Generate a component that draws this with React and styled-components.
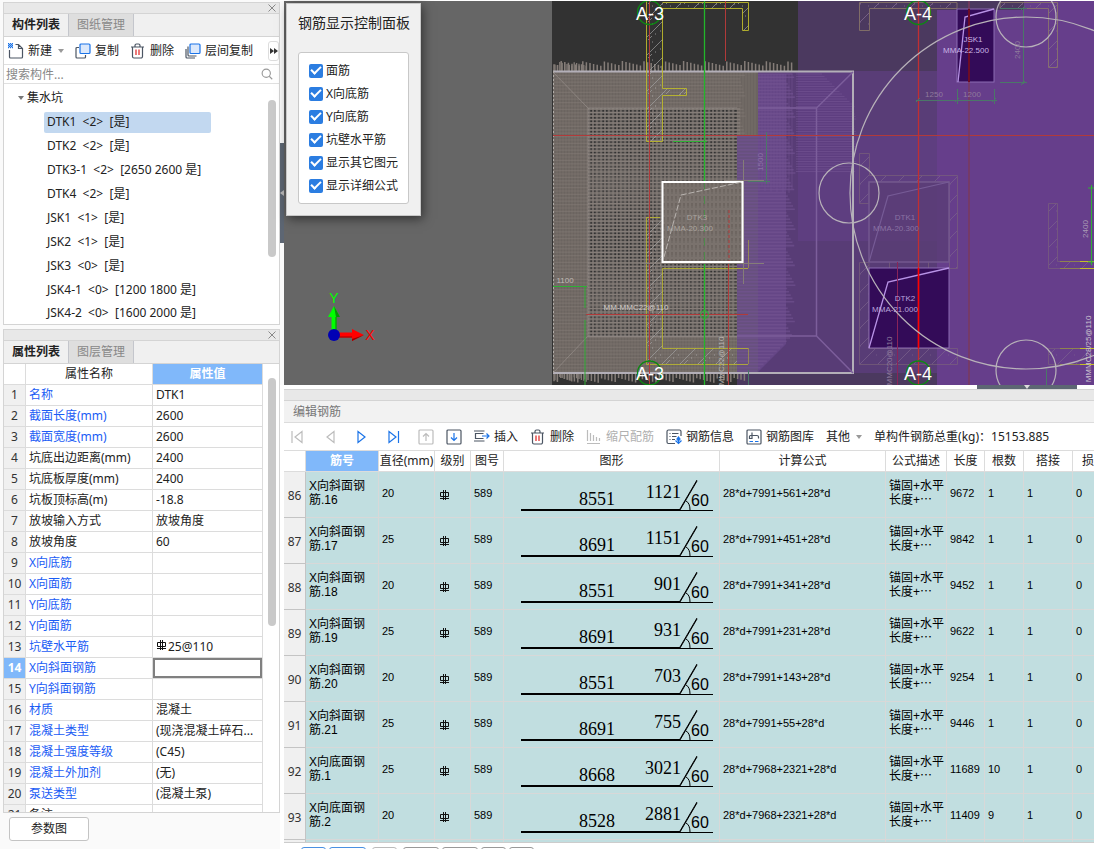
import React from "react";
import styled, { createGlobalStyle, css } from "styled-components";

const componentItems = [
  "DTK1  <2>  [是]",
  "DTK2  <2>  [是]",
  "DTK3-1  <2>  [2650 2600 是]",
  "DTK4  <2>  [是]",
  "JSK1  <1>  [是]",
  "JSK2  <1>  [是]",
  "JSK3  <0>  [是]",
  "JSK4-1  <0>  [1200 1800 是]",
  "JSK4-2  <0>  [1600 2000 是]",
];

const properties = [
  { name: "名称", value: "DTK1", link: true },
  { name: "截面长度(mm)", value: "2600", link: true },
  { name: "截面宽度(mm)", value: "2600", link: true },
  { name: "坑底出边距离(mm)", value: "2400" },
  { name: "坑底板厚度(mm)", value: "2400" },
  { name: "坑板顶标高(m)", value: "-18.8" },
  { name: "放坡输入方式", value: "放坡角度" },
  { name: "放坡角度", value: "60" },
  { name: "X向底筋", value: "", link: true },
  { name: "X向面筋", value: "", link: true },
  { name: "Y向底筋", value: "", link: true },
  { name: "Y向面筋", value: "", link: true },
  { name: "坑壁水平筋", value: "25@110", link: true, rebar: true },
  { name: "X向斜面钢筋", value: "", link: true, editing: true },
  { name: "Y向斜面钢筋", value: "", link: true },
  { name: "材质", value: "混凝土", link: true },
  { name: "混凝土类型", value: "(现浇混凝土碎石...", link: true },
  { name: "混凝土强度等级", value: "(C45)", link: true },
  { name: "混凝土外加剂", value: "(无)", link: true },
  { name: "泵送类型", value: "(混凝土泵)", link: true },
  { name: "备注", value: "" },
];

const displayOptions = ["面筋", "X向底筋", "Y向底筋", "坑壁水平筋", "显示其它图元", "显示详细公式"];

const rebarRows = [
  { no: 86, name: "X向斜面钢筋.16", dia: 20, base: 8551, slope: 1121, formula: "28*d+7991+561+28*d", length: 9672, count: 1 },
  { no: 87, name: "X向斜面钢筋.17", dia: 25, base: 8691, slope: 1151, formula: "28*d+7991+451+28*d", length: 9842, count: 1 },
  { no: 88, name: "X向斜面钢筋.18", dia: 20, base: 8551, slope: 901, formula: "28*d+7991+341+28*d", length: 9452, count: 1 },
  { no: 89, name: "X向斜面钢筋.19", dia: 25, base: 8691, slope: 931, formula: "28*d+7991+231+28*d", length: 9622, count: 1 },
  { no: 90, name: "X向斜面钢筋.20", dia: 20, base: 8551, slope: 703, formula: "28*d+7991+143+28*d", length: 9254, count: 1 },
  { no: 91, name: "X向斜面钢筋.21", dia: 25, base: 8691, slope: 755, formula: "28*d+7991+55+28*d", length: 9446, count: 1 },
  { no: 92, name: "X向底面钢筋.1", dia: 25, base: 8668, slope: 3021, formula: "28*d+7968+2321+28*d", length: 11689, count: 10 },
  { no: 93, name: "X向底面钢筋.2", dia: 20, base: 8528, slope: 2881, formula: "28*d+7968+2321+28*d", length: 11409, count: 9 },
];

const columns = [
  { title: "", width: 22 },
  { title: "筋号", width: 73, active: true },
  { title: "直径(mm)", width: 56 },
  { title: "级别", width: 36 },
  { title: "图号", width: 33 },
  { title: "图形", width: 216 },
  { title: "计算公式", width: 166 },
  { title: "公式描述", width: 61 },
  { title: "长度", width: 38 },
  { title: "根数", width: 39 },
  { title: "搭接", width: 49 },
  { title: "损", width: 42, left: true },
];

// ---------- icons ----------

const Icon = ({ children, size = 16 }) => (
  <svg width={size} height={size} viewBox="0 0 16 16" fill="none" stroke="#4b5563" strokeWidth="1.2" aria-hidden="true">
    {children}
  </svg>
);

const NewIcon = () => (
  <Icon>
    <path d="M1.5 7v7a1 1 0 0 0 1 1h11a1 1 0 0 0 1-1V5.500L10.500 1.500H7.500M10.500 1.500v4h4" />
    <path d="M0 .5h1M2 .5h1M4 .5h1M1 1.500h1M3 1.500h1M0 2.500h1M2 2.500h1M4 2.500h1M1 3.500h1M3 3.500h1M0 4.500h1M2 4.500h1M4 4.500h1" stroke="#1a73e8" strokeWidth="1.4" />
  </Icon>
);

const CopyIcon = () => (
  <Icon>
    <path d="M4 4.500H2a1 1 0 0 0-1 1V14a1 1 0 0 0 1 1h7.500a1 1 0 0 0 1-1v-2" />
    <rect x="5" y="1" width="10" height="9.500" rx="1" fill="#dbe8fb" stroke="#1a73e8" />
  </Icon>
);

const LayerCopyIcon = () => (
  <Icon>
    <path d="M3 3.500v8.500a1 1 0 0 0 1 1h7.500M1 6v8a1 1 0 0 0 1 1h8" />
    <rect x="5" y="1" width="10" height="9.500" rx="1" fill="#dbe8fb" stroke="#1a73e8" />
  </Icon>
);

const TrashIcon = () => (
  <Icon>
    <path d="M1 4h13M5 4V2.500a1.500 1.500 0 0 1 1.500-1.500h2A1.500 1.500 0 0 1 10 2.500V4M2.500 4v9.500A1.500 1.500 0 0 0 4 15h7a1.500 1.500 0 0 0 1.500-1.500V4" />
    <path d="M6 6.500v5.500M9 6.500v5.500" stroke="#e02020" />
  </Icon>
);

const SearchIcon = () => (
  <Icon size={12}>
    <circle cx="7" cy="7" r="5.500" stroke="#999" strokeWidth="1.500" />
    <path d="M11 11l4 4" stroke="#999" strokeWidth="1.500" />
  </Icon>
);

const CloseIcon = () => (
  <Icon size={8}>
    <path d="M1 1l14 14M15 1L1 15" stroke="#888" strokeWidth="2" />
  </Icon>
);

const FirstIcon = () => (
  <Icon>
    <path d="M2 2v12M12 2.500v11L5 8z" stroke="#bcbcbc" />
  </Icon>
);

const PrevIcon = () => (
  <Icon>
    <path d="M12 2.500v11L5 8z" stroke="#bcbcbc" />
  </Icon>
);

const NextIcon = () => (
  <Icon>
    <path d="M4 2.500v11L11 8z" stroke="#1a73e8" />
  </Icon>
);

const LastIcon = () => (
  <Icon>
    <path d="M3 2.500v11L10 8zM12.500 2v12" stroke="#1a73e8" />
  </Icon>
);

const UpIcon = () => (
  <Icon>
    <rect x="1" y="1" width="14" height="14" rx="1" stroke="#bcbcbc" />
    <path d="M8 12V5M5 7.500l3-3 3 3" stroke="#bcbcbc" />
  </Icon>
);

const DownIcon = () => (
  <Icon>
    <rect x="1" y="1" width="14" height="14" rx="1" />
    <path d="M8 4v7M5 8.500l3 3 3-3" stroke="#1a73e8" />
  </Icon>
);

const InsertIcon = () => (
  <Icon>
    <path d="M0 2h10.500M0 12h10.500M9.500 4.500H1.500v5h8" />
    <path d="M8 7h7M12.500 4.500L15 7l-2.500 2.500" stroke="#1a73e8" />
  </Icon>
);

const ScaleIcon = () => (
  <Icon>
    <path d="M1.500 1v11M4.500 4v8M7.500 6v6M10.500 8v4M13.500 9v3M1 14.500h13" stroke="#bcbcbc" />
  </Icon>
);

const InfoIcon = () => (
  <Icon>
    <path d="M9 14.500H2.500a1.500 1.500 0 0 1-1.500-1.500V2.500A1.500 1.500 0 0 1 2.500 1h11A1.500 1.500 0 0 1 15 2.500V7M3.500 4.500h1M6 4.500h6.500M3.500 7.500h1M6 7.500h4.500M3.500 10.500h1M6 10.500h3" />
    <path d="M12.500 7.500v3M12.500 14.500v-4M9.500 11.500l3 3 3-3M12.500 8l1.500 2-1.500 2-1.500-2z" stroke="#1a73e8" />
  </Icon>
);

const LibraryIcon = () => (
  <Icon>
    <rect x="1" y="1" width="14" height="14" rx="1" />
    <path d="M6 3.500v6H3.500V7.500a1 1 0 0 1 1-1H11a1.500 1.500 0 0 1 1.500 1.500v1.500" />
    <path d="M3.500 12.500h3.500M9 12.500h3.500" stroke="#1a73e8" />
  </Icon>
);

const RebarSymbol = () => (
  <svg width="10" height="11" viewBox="0 0 10 11" fill="none" stroke="#111" strokeWidth="1" aria-hidden="true">
    <path d="M.5 2.500h8v4h-8zM3.500 0v10M5.500 0v10M0 8.500h9" />
  </svg>
);

const BarShape = ({ base, slope }) => (
  <svg width="206" height="44" viewBox="0 0 206 44" aria-hidden="true">
    <path d="M14 37H173" stroke="#000" strokeWidth="2" />
    <path d="M173 37.500H207M190 8L173 37M179 28q4 2 4 9" fill="none" stroke="#000" strokeWidth="1" />
    <path d="M190 7L173 36" stroke="#000" strokeWidth="1" />
    <ShapeText x="72" y="32">{base}</ShapeText>
    <ShapeText x="174" y="25" textAnchor="end">{slope}</ShapeText>
    <AngleText x="184" y="33">60</AngleText>
  </svg>
);

// ---------- model view ----------

const jitter = (i) => ((i * 37 + 11) % 17) / 17;

const steps = (from, to, step) => {
  const out = [];
  for (let v = from; v < to; v += step) out.push(v);
  return out;
};

const meshVertical = steps(589, 737, 4).map((x) => `M${x} 108V337`).join("");
const meshHorizontal = steps(109, 337, 3.5).map((y) => `M588 ${y}H740`).join("");
const frameVertical = steps(554, 757, 3).map((x) => `M${x} 71V373`).join("");
const frameHorizontal = steps(72, 373, 3.4).map((y, i) => `M553 ${y}H${740 + jitter(i) * 6}`).join("");
const topTicks = steps(554, 794, 3.6).map((x, i) => `M${x} ${61 + jitter(i) * 5}V71`).join("");
const cornerTicks = steps(555, 588, 2.4).map((x, i) => `M${x} ${62 + jitter(i) * 4}V71M${x} 373V${377 + jitter(i) * 5}`).join("");
const bottomTicks = steps(554, 746, 3.4).map((x, i) => `M${x} 373V${378 + jitter(i) * 5}`).join("");
const purpleStripes = steps(74, 372, 3.3)
  .map((y, i) => `M${y < 136 ? 758 : 737} ${y}H${y > 335 ? 793 - (y - 335) : 786 + jitter(i) * 10}`)
  .join("");
const purpleBars = steps(759, 795, 3).map((x) => `M${x} 74V${186 + jitter(x) * 8}`).join("");
const cornerStripes = steps(74, 172, 2.5)
  .map((y, i) => `M796 ${y}H${Math.min(822 + (y - 74), 853 + jitter(i) * 4)}`)
  .join("");

const ModelDrawing = () => (
  <Drawing viewBox="284 1 810 384" preserveAspectRatio="xMinYMin slice" role="img" aria-label="基坑模型">
    <defs>
      <pattern id="hatch" width="18" height="18" patternUnits="userSpaceOnUse">
        <path d="M0 18L18 0M-4 8L8-4" stroke="#a5a5a5" strokeWidth="1" />
        <path d="M4 6h1M12 13h1M14 4h1M7 16h1" stroke="#bbb" strokeWidth="1" />
      </pattern>
      <pattern id="hatchDim" width="18" height="18" patternUnits="userSpaceOnUse">
        <path d="M0 18L18 0" stroke="#80688f" strokeWidth="1" />
        <path d="M4 6h1M12 13h1M14 4h1" stroke="#80688f" strokeWidth="1" />
      </pattern>
    </defs>
    <rect x="284" y="1" width="810" height="384" fill="#666" />
    <rect x="552" y="1" width="542" height="384" fill="#323232" />
    <rect x="798" y="1" width="139" height="384" fill="#4b395f" />
    <rect x="737" y="136" width="61" height="249" fill="#4b395f" />
    <rect x="758" y="71" width="179" height="302" fill="#583c76" />
    <rect x="737" y="136" width="21" height="237" fill="#583c76" />
    <rect x="798" y="71" width="139" height="170" fill="#5e3e80" />
    <rect x="853" y="71" width="84" height="64" fill="#593d77" />
    <rect x="937" y="1" width="157" height="384" fill="#663e8b" />
    <rect x="937" y="1" width="87" height="9" fill="#4b395f" />

    {/* reinforcement mesh */}
    <rect x="553" y="71" width="184" height="302" fill="#45403c" />
    <rect x="737" y="71" width="21" height="65" fill="#45403c" />
    <rect x="588" y="108" width="149" height="229" fill="#323232" />
    <g stroke="#857d78">
      <path d={topTicks} strokeWidth="1.500" />
      <path d={cornerTicks} strokeWidth="1.300" />
      <path d={bottomTicks} strokeWidth="1.500" />
      <path d={frameVertical} strokeWidth="1.200" opacity=".35" />
      <path d={frameHorizontal} strokeWidth="1.200" opacity=".45" />
      <path d={meshVertical} strokeWidth="1.600" opacity=".8" />
      <path d={meshHorizontal} strokeWidth="1.500" />
    </g>
    <path d="M553 71H588V373H553zM588 71H737V108H588zM588 337H737V373H588zM737 71H758V136H737z" fill="#857d78" opacity=".6" />
    <path d="M737 136H758V373H737z" fill="#67507e" />
    <path d="M758 74H786V344L758 372z" fill="#654686" />
    <g stroke="#745493">
      <path d={purpleStripes} strokeWidth="1.600" opacity=".6" />
      <path d={purpleBars} strokeWidth="1" opacity=".5" />
      <path d={cornerStripes} strokeWidth="1" opacity=".6" />
    </g>

    {/* pit outline */}
    <path d="M553 71.500H853V373H553" fill="none" stroke="#b3afb8" strokeWidth="2" />
    <path d="M553.500 71V373" stroke="#b0aca8" strokeDasharray="2 2" />
    <path d="M588 108H737M588 108V336M588 336H737M553 72l35 36M553 373l35-37" fill="none" stroke="#a39c98" strokeWidth="1" opacity=".5" />
    <path d="M758 108H816.500M737 336H816.500V108M816.500 108L853 72M816.500 336L853 373" fill="none" stroke="#7c5e9b" strokeWidth="1.500" />

    {/* walls */}
    <g fill="url(#hatch)" opacity=".65">
      <path d="M647 1H663V141H647zM663 2H749V31H742V9H663zM663 88H686V95H663zM647 217H663V348H737V364H647z" />
    </g>
    <g fill="none" stroke="#bdb92b">
      <path d="M646.500 1V141.500H662.500V95.500H686.500V88.500H662.500V8.500M662.500 2.500H748.500V30.500H742.500V8.500H662.500" opacity=".9" />
      <path d="M660 217.500H646.500V364.500H748M662.500 268.500V348.500H748M662.500 268.500H748" opacity=".8" />
      <path d="M748.500 240V268M748.500 348V364" opacity=".5" />
    </g>
    <g fill="url(#hatchDim)" opacity=".8" stroke="#8e7b6a">
      <path d="M859.500 2.500V30.500H869.500V8.500H957V2.500z" />
      <path d="M1000 2.500H1057.500V67.500H1048.500V8.500H1000z" />
    </g>
    <g fill="url(#hatchDim)" opacity=".6" stroke="#7e6679">
      <path d="M859.500 153.500H869.500V175.500H957.500V268.500H949.500V182H869V203.500H859.500z" />
      <path d="M869 262.500H859.500V364.500H957.500V348.500H869z" />
      <path d="M889.500 262V268M928.500 262V268" />
      <path d="M1048.500 203.500H1057.500V261.500H1096V268.500H1048.500z" />
      <path d="M1048.500 348.500H1096V364.500H1048.500z" />
    </g>
    <path d="M1060 261.500h20M1060 268.500h20M1060 348.500h20M1060 364.500h20" stroke="#8f8350" />
    <path d="M1080 261.500h14M1080 268.500h14M1080 348.500h14M1080 364.500h14" stroke="#c4bd28" />

    {/* sub pits */}
    <rect x="869" y="182" width="80" height="80" fill="#5a3d76" fillOpacity=".8" stroke="#73578f" strokeWidth="1.500" />
    <path d="M869 262L888 196L949 182" fill="none" stroke="#765b96" strokeWidth="1.200" />
    <rect x="869" y="268" width="80" height="80" fill="#330b58" stroke="#8c6cb3" />
    <path d="M869 348L888 282L949 268" fill="none" stroke="#b893e6" strokeWidth="1.300" />
    <rect x="957" y="9" width="37" height="73" fill="#330b58" stroke="#8c6cb3" />
    <path d="M958 82L965 17L994 9" fill="none" stroke="#b893e6" strokeWidth="1.300" />

    {/* selected pit surface */}
    <rect x="662" y="182" width="80" height="80" fill="#7a726d" />
    <path d={steps(664, 742, 4).map((x) => `M${x} 182V262`).join("")} stroke="#5a544f" strokeDasharray="1 2.500" opacity=".8" />
    <path d={steps(184, 262, 7).map((y) => `M663 ${y}H742`).join("")} stroke="#4c4743" strokeDasharray="2 2" opacity=".5" />

    {/* axes and dimension lines */}
    <g fill="none" stroke="#b13a3a">
      <path d="M649.500 1V385M553 135.500H1094M725.500 1V61" />
      <path d="M586 314.500H748" />
      <path d="M729 210V262" strokeDasharray="3 2" />
      <path d="M728.500 262V385" />
    </g>
    <path d="M969 1V385" stroke="#7b3a5c" strokeWidth="1.500" />
    <path d="M969 9V82" stroke="#6d0c26" strokeWidth="2" />
    <path d="M897.500 262V385" stroke="#8a2459" />
    <path d="M918.500 1V385" stroke="#c02f32" strokeWidth="1.300" />
    <path d="M918.500 268V348" stroke="#f00" strokeWidth="1.500" />
    <path d="M704.500 1V182M704.500 262V385" stroke="#22b62a" strokeWidth="1.300" />
    <path d="M704.500 182V262" stroke="#4d8a4a" strokeDasharray="8 6" />
    <g fill="none" stroke="#2eae35">
      <path d="M673 141.500H707M553 286.500H587M585 286V308M585 320V385" />
      <circle cx="704.500" cy="314.500" r="4" />
      <path d="M1091.500 185V265M1088 188h6M1088 262h6" />
    </g>
    <g fill="none" stroke="#4b7768">
      <path d="M766.500 132V184M748 181.500H770M748.500 370V385" />
      <path d="M1023.500 8V84M1000 8.500H1027M1000 82.500H1027" />
      <path d="M916 100.500H997M957.500 89V104M994.500 89V104M1046.500 369V385" />
      <path d="M916 102l4-4M955 102l4-4M992 102l4-4M1021 10l4-4M1021 85l4-4" />
    </g>
    <path d="M743.500 160V284M640 263.500H764M724 180.500H764" stroke="#857d78" />

    {/* selected pit */}
    <rect x="662.500" y="182" width="80" height="80" fill="none" stroke="#fff" strokeWidth="2" />
    <path d="M664 257L681 195L742 182" fill="none" stroke="#b9b4b0" strokeDasharray="6 2" />

    <g fill="none" stroke="#b8b2b9" strokeWidth="1.200">
      <circle cx="1026" cy="193" r="176" />
      <circle cx="849" cy="193" r="30" />
      <circle cx="1026" cy="17" r="30" />
      <circle cx="1026" cy="370" r="30" />
    </g>

    <g fill="none" stroke="#0c8a12" strokeWidth="1.300">
      <circle cx="649.500" cy="12.500" r="12" />
      <circle cx="649.500" cy="373" r="12" />
      <circle cx="918.500" cy="12.500" r="12" />
      <circle cx="918.500" cy="373" r="12" />
    </g>
    <AxisLabel x="650" y="20">A-3</AxisLabel>
    <AxisLabel x="650" y="380">A-3</AxisLabel>
    <AxisLabel x="918" y="20">A-4</AxisLabel>
    <AxisLabel x="918" y="380">A-4</AxisLabel>

    <CadText x="697" y="220" $color="#aaa49f">DTK3</CadText>
    <CadText x="690" y="231" $color="#aaa49f">MMA-20.300</CadText>
    <CadText x="905" y="220" $color="#8a72a3">DTK1</CadText>
    <CadText x="896" y="231" $color="#8a72a3">MMA-20.300</CadText>
    <CadText x="905" y="301" $color="#bba5dc">DTK2</CadText>
    <CadText x="895" y="312" $color="#bba5dc">MMA-21.000</CadText>
    <CadText x="973" y="42" $color="#c9b4e6">JSK1</CadText>
    <CadText x="966" y="53" $color="#c9b4e6">MMA-22.500</CadText>
    <CadText x="934" y="97" $color="#8f7b9c">1250</CadText>
    <CadText x="972" y="97" $color="#8f7b9c">1200</CadText>
    <CadText x="565" y="283" $color="#c0bab6">1100</CadText>
    <CadText x="636" y="310" $color="#d0cac6">MM-MMC22@110</CadText>
    <CadText transform="translate(763 162) rotate(-90)" $color="#8b72a4">1500</CadText>
    <CadText transform="translate(1020 50) rotate(-90)" $color="#8f7b9c">2400</CadText>
    <CadText transform="translate(1088 229) rotate(-90)" $color="#aa9bb5">2400</CadText>
    <CadText transform="translate(1091 349) rotate(-90)" $color="#cbc3d0">MMMC28/25@110</CadText>
    <CadText transform="translate(892 361) rotate(-90)" $color="#8f7b9c">MMC20@110</CadText>
    <CadText transform="translate(724 361) rotate(-90)" $color="#bdb7b3">MMC22@110</CadText>

    {/* coordinate tripod */}
    <path d="M334 335V316" stroke="#0f0" strokeWidth="5" />
    <path d="M336 335V316" stroke="#0a7a0a" strokeWidth="1" />
    <path d="M334 306l6 11h-12z" fill="#0f0" />
    <path d="M334 306l6 11h-4z" fill="#0a8f0a" />
    <path d="M335 335H352" stroke="#f00" strokeWidth="5" />
    <path d="M335 337H352" stroke="#900" strokeWidth="1" />
    <path d="M364 335l-12-6v12z" fill="#f00" />
    <path d="M364 335l-12 4v2z" fill="#900" />
    <circle cx="334" cy="335" r="6" fill="#0000b4" />
    <TripodText x="334" y="303" fill="#0f0">Y</TripodText>
    <TripodText x="370" y="340" fill="#f00">X</TripodText>
  </Drawing>
);

// ---------- panels ----------

function ComponentPanel() {
  return (
    <Panel>
      <PanelStrip>
        <CloseButton aria-label="关闭构件列表"><CloseIcon /></CloseButton>
      </PanelStrip>
      <Tabs>
        <Tab $active>构件列表</Tab>
        <Tab>图纸管理</Tab>
      </Tabs>
      <ListToolbar>
        <ToolButton><NewIcon />新建<Caret $gap /></ToolButton>
        <ToolButton><CopyIcon />复制</ToolButton>
        <ToolButton><TrashIcon />删除</ToolButton>
        <ToolButton><LayerCopyIcon />层间复制</ToolButton>
        <MoreButton aria-label="更多">
          <svg width="8" height="6" viewBox="0 0 8 6" aria-hidden="true">
            <path d="M0 0l4 3-4 3zM4 0l4 3-4 3z" fill="#333" />
          </svg>
        </MoreButton>
      </ListToolbar>
      <SearchBar>
        <SearchInput aria-label="搜索构件" placeholder="搜索构件..." />
        <SearchIcon />
      </SearchBar>
      <ScrollArea>
        <Tree>
          <TreeGroup><Caret $dark />集水坑</TreeGroup>
          {componentItems.map((item, i) => (
            <TreeRow key={item}>
              <TreeItem $selected={i === 0}>{item}</TreeItem>
            </TreeRow>
          ))}
        </Tree>
        <ScrollTrack><ScrollThumb $top={16} $height={157} /></ScrollTrack>
      </ScrollArea>
    </Panel>
  );
}

function PropertyPanel() {
  return (
    <Panel $grow>
      <PanelStrip>
        <CloseButton aria-label="关闭属性列表"><CloseIcon /></CloseButton>
      </PanelStrip>
      <Tabs>
        <Tab $active>属性列表</Tab>
        <Tab>图层管理</Tab>
      </Tabs>
      <ScrollArea $grow>
        <PropertyTable>
          <colgroup>
            <col width="22" />
            <col width="127" />
            <col />
          </colgroup>
          <thead>
            <tr>
              <PropHead />
              <PropHead>属性名称</PropHead>
              <PropHead $active>属性值</PropHead>
            </tr>
          </thead>
          <tbody>
            {properties.map((p, i) => (
              <tr key={p.name}>
                <PropIndex $active={p.editing}>{i + 1}</PropIndex>
                <PropName $link={p.link}>{p.name}</PropName>
                <PropValue $editing={p.editing}>
                  {p.rebar && <RebarSymbol />}
                  {p.editing ? <ValueInput aria-label={p.name} /> : p.value}
                </PropValue>
              </tr>
            ))}
          </tbody>
        </PropertyTable>
        <ScrollTrack><ScrollThumb $top={14} $height={248} /></ScrollTrack>
      </ScrollArea>
    </Panel>
  );
}

function DisplayPanel() {
  return (
    <FloatingPanel>
      <FloatingTitle>钢筋显示控制面板</FloatingTitle>
      <OptionBox>
        {displayOptions.map((label) => (
          <Option key={label}>
            <Checkbox type="checkbox" defaultChecked />
            {label}
          </Option>
        ))}
      </OptionBox>
    </FloatingPanel>
  );
}

function RebarEditor() {
  return (
    <Editor>
      <EditorStrip />
      <EditorTitle>编辑钢筋</EditorTitle>
      <EditorToolbar>
        <NavButton aria-label="首行"><FirstIcon /></NavButton>
        <NavButton aria-label="上一行"><PrevIcon /></NavButton>
        <NavButton aria-label="下一行"><NextIcon /></NavButton>
        <NavButton aria-label="末行"><LastIcon /></NavButton>
        <NavButton $narrow aria-label="上移"><UpIcon /></NavButton>
        <NavButton $narrow aria-label="下移"><DownIcon /></NavButton>
        <Actions>
          <ToolButton><InsertIcon />插入</ToolButton>
          <ToolButton><TrashIcon />删除</ToolButton>
          <ToolButton disabled><ScaleIcon />缩尺配筋</ToolButton>
          <ToolButton><InfoIcon />钢筋信息</ToolButton>
          <ToolButton><LibraryIcon />钢筋图库</ToolButton>
          <ToolButton>其他<Caret $gap /></ToolButton>
          <Total>单构件钢筋总重(kg)：15153.885</Total>
        </Actions>
      </EditorToolbar>
      <TableWrap>
        <RebarTable>
          <colgroup>
            {columns.map((c, i) => <col key={i} width={c.width} />)}
          </colgroup>
          <thead>
            <tr>
              {columns.map((c, i) => (
                <RebarHead key={i} $active={c.active} $left={c.left}>{c.title}</RebarHead>
              ))}
            </tr>
          </thead>
          <tbody>
            {rebarRows.map((r) => (
              <tr key={r.no}>
                <RowNumber>{r.no}</RowNumber>
                <Cell $wrap>{r.name}</Cell>
                <Cell>{r.dia}</Cell>
                <Cell $symbol><RebarSymbol /></Cell>
                <Cell>589</Cell>
                <Cell $shape><BarShape base={r.base} slope={r.slope} /></Cell>
                <Cell>{r.formula}</Cell>
                <Cell $wrap>锚固+水平<br />长度+⋯</Cell>
                <Cell>{r.length}</Cell>
                <Cell>{r.count}</Cell>
                <Cell>1</Cell>
                <Cell>0</Cell>
              </tr>
            ))}
            <tr>
              <RowNumber />
              {columns.slice(1).map((c) => <Cell key={c.title} />)}
            </tr>
          </tbody>
        </RebarTable>
      </TableWrap>
      <PageBar>
        <PageButton $width={25} $tone="#4a90e2" aria-label="第1页" />
        <PageButton $width={37} $tone="#4a90e2" aria-label="第2页" />
        <PageButton $width={25} $tone="#bbb" $apart aria-label="第3页" />
        <PageButton $width={36} $tone="#999" $apart aria-label="第4页" />
        <PageButton $width={36} $tone="#999" aria-label="第5页" />
        <PageButton $width={25} $tone="#999" aria-label="第6页" />
        <PageButton $width={25} $tone="#999" aria-label="第7页" />
      </PageBar>
    </Editor>
  );
}

function App() {
  return (
    <>
      <GlobalStyle />
      <Window>
        <Sidebar>
          <ComponentPanel />
          <PropertyPanel />
          <SidebarFooter>
            <ParamButton>参数图</ParamButton>
          </SidebarFooter>
        </Sidebar>
        <Main>
          <ViewRow>
            <SideSplitter>
              <SideHandle aria-label="收起侧栏">
                <svg width="4" height="6" viewBox="0 0 4 6" aria-hidden="true">
                  <path d="M4 0L0 3l4 3z" fill="#bbb" />
                </svg>
              </SideHandle>
            </SideSplitter>
            <ModelView>
              <ModelDrawing />
              <DisplayPanel />
            </ModelView>
          </ViewRow>
          <BottomSplitter>
            <BottomHandle aria-label="收起编辑区">
              <svg width="6" height="4" viewBox="0 0 6 4" aria-hidden="true">
                <path d="M0 0h6L3 4z" fill="#ddd" />
              </svg>
            </BottomHandle>
          </BottomSplitter>
          <RebarEditor />
        </Main>
      </Window>
    </>
  );
}

export default App;

const GlobalStyle = createGlobalStyle`
  * {
    box-sizing: border-box;
  }

  body {
    margin: 0;
    background: #fff;
    color: #222;
    font-family: "Noto Sans", "Noto Sans CJK SC", sans-serif;
    font-size: 12px;
    line-height: 16px;
  }

  button,
  input {
    font: inherit;
    color: inherit;
  }

  svg {
    flex: none;
  }
`;

const Window = styled.div`
  display: flex;
  height: 100vh;
  overflow: hidden;
`;

const Sidebar = styled.aside`
  flex: 0 0 280px;
  display: flex;
  flex-direction: column;
  gap: 4px;
  padding: 2px 0 0 3px;
  background: #fafafa;
`;

const Main = styled.main`
  flex: 1;
  min-width: 0;
  display: flex;
  flex-direction: column;
  padding-top: 1px;
`;

const Panel = styled.section`
  display: flex;
  flex-direction: column;
  border: 1px solid #d4d4d4;
  background: #fff;
  ${(props) =>
    props.$grow &&
    css`
      flex: 1;
      min-height: 0;
    `}
`;

const PanelStrip = styled.div`
  display: flex;
  justify-content: flex-end;
  align-items: center;
  height: 10px;
  padding-right: 3px;
  background: #e8e8e8;
`;

const CloseButton = styled.button`
  display: flex;
  padding: 0;
  border: 0;
  background: none;
`;

const Tabs = styled.div`
  display: flex;
  height: 24px;
  background: #f0f0f0;
  border-top: 1px solid #d4d4d4;
  border-bottom: 1px solid #d4d4d4;
`;

const Tab = styled.button`
  width: 65px;
  padding: 0;
  border: 0;
  border-right: 1px solid #c4c6cc;
  background: ${(props) => (props.$active ? "#f0f0f0" : "#dedede")};
  color: ${(props) => (props.$active ? "#222" : "#888")};
  font-weight: ${(props) => (props.$active ? "bold" : "normal")};
`;

const ListToolbar = styled.div`
  display: flex;
  align-items: center;
  gap: 11px;
  height: 28px;
  padding-left: 4px;
  border-bottom: 1px solid #e0e0e0;
`;

const ToolButton = styled.button`
  display: flex;
  align-items: center;
  gap: 4px;
  padding: 0;
  border: 0;
  background: none;
  white-space: nowrap;

  &:disabled {
    color: #b0b0b0;
  }
`;

const Caret = styled.span`
  width: 0;
  height: 0;
  margin-left: ${(props) => (props.$gap ? "2px" : "0")};
  border: 3px solid transparent;
  border-top: 4px solid ${(props) => (props.$dark ? "#777" : "#999")};
  border-bottom: 0;
`;

const MoreButton = styled.button`
  display: flex;
  align-items: center;
  justify-content: center;
  width: 11px;
  height: 20px;
  margin-left: auto;
  padding: 0;
  border: 1px solid #ddd;
  border-radius: 3px;
  background: #fff;
`;

const SearchBar = styled.div`
  display: flex;
  align-items: center;
  height: 19px;
  padding: 0 6px 0 2px;
  border-bottom: 1px solid #e0e0e0;
`;

const SearchInput = styled.input`
  flex: 1;
  min-width: 0;
  height: 18px;
  padding: 0;
  border: 0;
  outline: 0;
  background: none;

  &::placeholder {
    color: #888;
    opacity: 1;
  }
`;

const ScrollArea = styled.div`
  display: flex;
  overflow: hidden;
  ${(props) =>
    props.$grow &&
    css`
      flex: 1;
      min-height: 0;
      align-items: flex-start;
    `}
`;

const Tree = styled.ul`
  flex: 1;
  margin: 0;
  padding: 0;
  list-style: none;
`;

const TreeGroup = styled.li`
  display: flex;
  align-items: center;
  gap: 3px;
  height: 26px;
  padding: 2px 0 0 14px;
`;

const TreeRow = styled.li`
  display: flex;
  align-items: center;
  height: 24px;
  padding-left: 40px;

  &:last-child {
    height: 22px;
  }
`;

const TreeItem = styled.span`
  width: 167px;
  padding: 2px 3px 3px;
  border-radius: 2px;
  background: ${(props) => (props.$selected ? "#c2d8f0" : "none")};
  white-space: pre;
`;

const ScrollTrack = styled.div`
  width: 16px;
  padding: 0 3px 0 5px;
`;

const ScrollThumb = styled.div`
  height: ${(props) => props.$height}px;
  margin-top: ${(props) => props.$top}px;
  border-radius: 4px;
  background: #c9c9c9;
`;

const PropertyTable = styled.table`
  flex: 1;
  width: 100%;
  table-layout: fixed;
  border-collapse: separate;
  border-spacing: 0;

  th,
  td {
    height: 21px;
    padding: 0;
    border-right: 1px solid #dcdcdc;
    border-bottom: 1px solid #dcdcdc;
    white-space: nowrap;
  }
`;

const PropHead = styled.th`
  font-weight: ${(props) => (props.$active ? "bold" : "normal")};
  color: ${(props) => (props.$active ? "#fff" : "#222")};
  background: ${(props) => (props.$active ? "#80b8fa" : "#fff")};
`;

const PropIndex = styled.td`
  text-align: center;
  color: ${(props) => (props.$active ? "#fff" : "#333")};
  font-weight: ${(props) => (props.$active ? "bold" : "normal")};
  background: ${(props) => (props.$active ? "#80b8fa" : "#f0f0f0")};
`;

const PropName = styled.td`
  && {
    padding-left: 3px;
  }
  color: ${(props) => (props.$link ? "#1a5cf5" : "#222")};
`;

const PropValue = styled.td`
  && {
    padding-left: ${(props) => (props.$editing ? "0" : "3px")};
  }

  svg {
    margin: 0 1px;
  }
`;

const ValueInput = styled.input`
  display: block;
  width: 100%;
  height: 20px;
  padding: 0 3px;
  border: 2px solid #808080;
  border-radius: 0;
  outline: 0;
  background: #fff;
`;

const SidebarFooter = styled.div`
  height: 32px;
  padding-left: 6px;
`;

const ParamButton = styled.button`
  width: 80px;
  height: 24px;
  padding: 0;
  border: 1px solid #c4c4c4;
  border-radius: 3px;
  background: #fff;
`;

const ViewRow = styled.div`
  display: flex;
  height: 384px;
`;

const SideSplitter = styled.div`
  display: flex;
  align-items: center;
  width: 4px;
  background: #fafafa;
`;

const SideHandle = styled.button`
  display: flex;
  align-items: center;
  width: 4px;
  height: 100px;
  padding: 0;
  border: 0;
  background: #5d6673;
`;

const ModelView = styled.div`
  position: relative;
  flex: 1;
  min-width: 0;
`;

const Drawing = styled.svg`
  display: block;
  width: 100%;
  height: 100%;
`;

const AxisLabel = styled.text`
  fill: #fff;
  font-family: "Liberation Sans", sans-serif;
  font-size: 18px;
  text-anchor: middle;
`;

const CadText = styled.text`
  fill: ${(props) => props.$color};
  font-family: "Liberation Sans Narrow", "Liberation Sans", sans-serif;
  font-size: 8px;
  text-anchor: middle;
`;

const TripodText = styled.text`
  font-family: "Liberation Sans", sans-serif;
  font-size: 14px;
  text-anchor: middle;
`;

const FloatingPanel = styled.section`
  position: absolute;
  top: 2px;
  left: 2px;
  width: 135px;
  padding: 10px 11px 11px;
  border: 1px solid #c8c8c8;
  background: #f0f0f0;
  box-shadow: 2px 3px 10px rgba(0, 0, 0, 0.5);
`;

const FloatingTitle = styled.h2`
  margin: 0 0 21px;
  font-size: 14px;
  font-weight: normal;
  line-height: 17px;
  white-space: nowrap;
`;

const OptionBox = styled.div`
  padding: 6px 0 6px 10px;
  border: 1px solid #c8c8c8;
  border-radius: 3px;
  background: #fff;
`;

const Option = styled.label`
  display: flex;
  align-items: center;
  gap: 3px;
  height: 23px;
  white-space: nowrap;
`;

const Checkbox = styled.input`
  appearance: none;
  display: grid;
  place-items: center;
  width: 14px;
  height: 14px;
  margin: 0;
  border-radius: 2px;
  background: #2b7de1;

  &:checked::after {
    content: "";
    width: 8px;
    height: 4px;
    margin-bottom: 3px;
    border: solid #fff;
    border-width: 0 0 2px 2px;
    transform: rotate(-45deg);
  }
`;

const BottomSplitter = styled.div`
  display: flex;
  justify-content: flex-end;
  height: 4px;
  padding-right: 17px;
`;

const BottomHandle = styled.button`
  display: flex;
  justify-content: center;
  width: 100px;
  height: 4px;
  padding: 0;
  border: 0;
  background: #5d6673;
`;

const Editor = styled.section`
  flex: 1;
  min-height: 0;
  display: flex;
  flex-direction: column;
  margin-left: 4px;
`;

const EditorStrip = styled.div`
  height: 12px;
  border-top: 1px solid #d4d4d4;
  border-bottom: 1px solid #d4d4d4;
  background: #e8e8e8;
`;

const EditorTitle = styled.h2`
  height: 22px;
  margin: 0;
  padding-left: 9px;
  border-bottom: 1px solid #dcdcdc;
  background: #f2f2f2;
  color: #777;
  font-size: 12px;
  font-weight: normal;
  line-height: 21px;
`;

const EditorToolbar = styled.div`
  display: flex;
  align-items: center;
  height: 28px;
  padding-left: 6px;
  border-bottom: 1px solid #dcdcdc;
`;

const NavButton = styled.button`
  display: flex;
  width: ${(props) => (props.$narrow ? "28px" : "32px")};
  padding: 0;
  border: 0;
  background: none;
`;

const Actions = styled.div`
  display: flex;
  align-items: center;
  gap: 12px;
`;

const Total = styled.span`
  white-space: nowrap;
`;

const TableWrap = styled.div`
  flex: 1;
  min-height: 0;
  overflow: hidden;
  border-bottom: 1px solid #ccc;
`;

const RebarTable = styled.table`
  width: 831px;
  min-width: 100%;
  table-layout: fixed;
  border-collapse: separate;
  border-spacing: 0;
`;

const RebarHead = styled.th`
  height: 21px;
  padding: ${(props) => (props.$left ? "0 0 0 9px" : "0")};
  border-right: 1px solid #dcdcdc;
  border-bottom: 1px solid #dcdcdc;
  background: ${(props) => (props.$active ? "#80b8fa" : "#fff")};
  color: ${(props) => (props.$active ? "#fff" : "#222")};
  font-weight: ${(props) => (props.$active ? "bold" : "normal")};
  text-align: ${(props) => (props.$left ? "left" : "center")};
  white-space: nowrap;
`;

const RowNumber = styled.th`
  height: 46px;
  padding: 2px 0 0;
  border-right: 1px solid #c4c4c4;
  border-bottom: 1px solid #c4c4c4;
  background: #f0f0f0;
  color: #333;
  font-weight: normal;
`;

const Cell = styled.td`
  height: 46px;
  padding: ${(props) => (props.$shape ? "0" : props.$symbol ? "0 0 0 5px" : "0 0 4px 3px")};
  border-right: 1px solid #d8d8d8;
  border-bottom: 1px solid #d8d8d8;
  background: #c1dee0;
  color: #000;
  font-family: "Liberation Sans", "Noto Sans CJK SC", sans-serif;
  font-size: ${(props) => (props.$wrap ? "12px" : "11px")};
  line-height: 14px;
  text-align: left;
  vertical-align: middle;
  word-break: ${(props) => (props.$wrap ? "break-all" : "normal")};

  svg {
    display: ${(props) => (props.$shape ? "block" : "inline-block")};
    margin-left: ${(props) => (props.$shape ? "3px" : "0")};
    vertical-align: middle;
  }
`;

const ShapeText = styled.text`
  font-family: "Liberation Serif", serif;
  font-size: 18px;
`;

const AngleText = styled.text`
  font-family: "Liberation Sans", sans-serif;
  font-size: 16px;
`;

const PageBar = styled.div`
  display: flex;
  gap: 3px;
  height: 6px;
  padding: 4px 0 0 17px;
  overflow: hidden;
`;

const PageButton = styled.button`
  flex: 0 0 ${(props) => props.$width}px;
  height: 22px;
  margin-left: ${(props) => (props.$apart ? "3px" : "0")};
  padding: 0;
  border: 1px solid ${(props) => props.$tone};
  border-radius: 3px;
  background: #fff;
`;
